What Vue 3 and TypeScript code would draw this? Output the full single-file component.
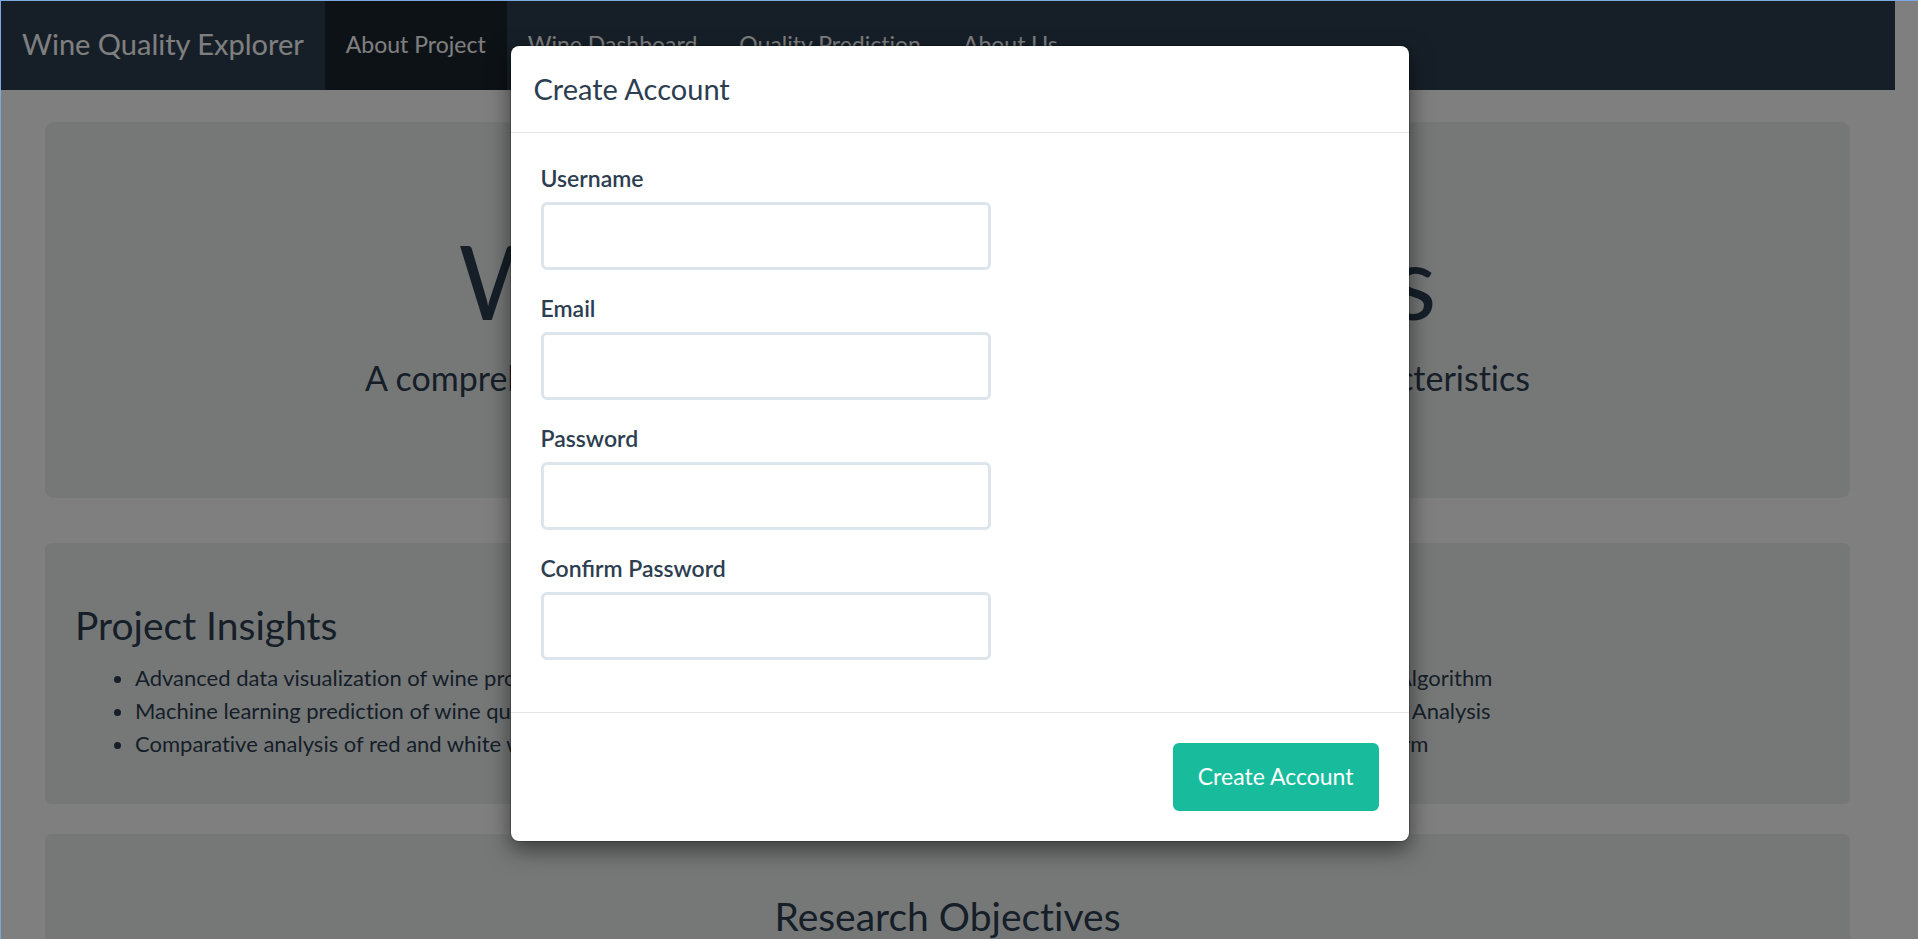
<script setup lang="ts">
import { ref } from 'vue'

interface NavLink {
  label: string
  active: boolean
}

interface Field {
  id: string
  label: string
  type: string
}

const navLinks: NavLink[] = [
  { label: 'About Project', active: true },
  { label: 'Wine Dashboard', active: false },
  { label: 'Quality Prediction', active: false },
  { label: 'About Us', active: false },
]

const insights: string[] = [
  'Advanced data visualization of wine properties',
  'Machine learning prediction of wine quality',
  'Comparative analysis of red and white wines',
]

const methods: string[] = [
  'Random Forest Machine Learning (ML) Algorithm',
  'Comprehensive Statistical and Graphical Analysis',
  'Interactive Web Data Application Platform',
]

const fields: Field[] = [
  { id: 'username', label: 'Username', type: 'text' },
  { id: 'email', label: 'Email', type: 'text' },
  { id: 'password', label: 'Password', type: 'password' },
  { id: 'confirm', label: 'Confirm Password', type: 'password' },
]

const values = ref<Record<string, string>>({ username: '', email: '', password: '', confirm: '' })
</script>

<template>
  <div class="window">
    <div class="page">
      <nav class="navbar">
        <a class="brand" href="#">Wine Quality Explorer</a>
        <a
          v-for="link in navLinks"
          :key="link.label"
          class="nav-link"
          :class="{ active: link.active }"
          href="#"
        >{{ link.label }}</a>
      </nav>

      <main class="content">
        <header class="hero">
          <h1>Wine Quality Analysis</h1>
          <p>A comprehensive machine learning approach to predicting wine characteristics</p>
        </header>

        <section class="well columns">
          <div>
            <h2>Project Insights</h2>
            <ul>
              <li v-for="item in insights" :key="item">{{ item }}</li>
            </ul>
          </div>
          <div>
            <h2>Methodology</h2>
            <ul>
              <li v-for="item in methods" :key="item">{{ item }}</li>
            </ul>
          </div>
        </section>

        <section class="well objectives">
          <h2>Research Objectives</h2>
        </section>
      </main>
    </div>

    <div class="backdrop">
      <form class="modal" role="dialog" aria-labelledby="modal-title" @submit.prevent>
        <div class="modal-header">
          <h4 id="modal-title">Create Account</h4>
        </div>
        <div class="modal-body">
          <div v-for="field in fields" :key="field.id" class="field">
            <label :for="field.id">{{ field.label }}</label>
            <input :id="field.id" v-model="values[field.id]" :type="field.type" autocomplete="off" />
          </div>
        </div>
        <div class="modal-footer">
          <button type="submit">Create Account</button>
        </div>
      </form>
    </div>
  </div>
</template>

<style>
body {
  margin: 0;
  overflow: hidden;
}
</style>

<style scoped>
.window,
.window * {
  box-sizing: border-box;
}

.window {
  position: relative;
  height: 100vh;
  overflow: hidden;
  border-top: 1px solid #80a8e0;
  border-left: 1px solid #80a8e0;
  background: #ffffff;
  color: #2c3e50;
  font-family: Lato, "Open Sans", sans-serif;
  font-size: 23px;
  line-height: 32px;
}

.page {
  padding-right: 23px;
  font-variant-ligatures: none;
}

.navbar {
  display: flex;
  height: 89px;
  background: #2c3e50;
}

.navbar a {
  display: flex;
  align-items: center;
  padding: 0 21px 4px;
  color: #ffffff;
  text-decoration: none;
}

.navbar .brand {
  font-size: 29px;
}

.navbar .active {
  background: #1a242f;
}

.content {
  padding: 32px 45px 0 44px;
}

.hero {
  margin-bottom: 45px;
  padding: 103px 30px 96px;
  border-radius: 9px;
  background: #ecf0f1;
  text-align: center;
}

.hero h1 {
  margin: 0 0 17px;
  font-size: 102px;
  font-weight: 400;
  line-height: 112px;
}

.hero p {
  margin: 0;
  font-size: 34px;
  line-height: 48px;
}

.well {
  margin-bottom: 30px;
  padding: 60px 30px 44px;
  border-radius: 6px;
  background: #ecf0f1;
}

.well h2 {
  margin: 0 0 14px;
  font-size: 39px;
  font-weight: 400;
  line-height: 44px;
}

.well ul {
  margin: 0;
  padding-left: 60px;
  font-size: 22px;
  line-height: 33px;
}

.columns {
  display: grid;
  grid-template-columns: 1fr 1fr;
  column-gap: 26px;
}

.objectives {
  min-height: 260px;
  text-align: center;
}

.backdrop {
  position: absolute;
  inset: 0;
  padding: 44px 20px;
  background: rgba(0, 0, 0, 0.5);
}

.modal {
  max-width: 900px;
  margin: 0 auto;
  border: 1px solid rgba(0, 0, 0, 0.2);
  border-radius: 9px;
  background: #ffffff;
  background-clip: padding-box;
  box-shadow: 0 8px 22px rgba(0, 0, 0, 0.5);
}

.modal-header {
  padding: 22px 23px;
  border-bottom: 1px solid #e5e5e5;
}

.modal-header h4 {
  margin: 0;
  font-size: 29px;
  font-weight: 400;
  line-height: 42px;
}

.modal-body {
  padding: 29px 30px 52px;
}

.field {
  display: flex;
  flex-direction: column;
  align-items: flex-start;
  gap: 8px;
}

.field + .field {
  margin-top: 22px;
}

.field label {
  font-weight: 600;
}

.field input {
  width: 450px;
  max-width: 100%;
  height: 68px;
  padding: 12px 20px;
  border: 3px solid #dce4ec;
  border-radius: 6px;
  outline: none;
  color: inherit;
  font: inherit;
}

.modal-footer {
  display: flex;
  justify-content: flex-end;
  padding: 30px;
  border-top: 1px solid #e5e5e5;
}

.modal-footer button {
  padding: 14px 22px 16px;
  border: 3px solid #18bc9c;
  border-radius: 6px;
  background: #18bc9c;
  color: #ffffff;
  font: inherit;
}
</style>
